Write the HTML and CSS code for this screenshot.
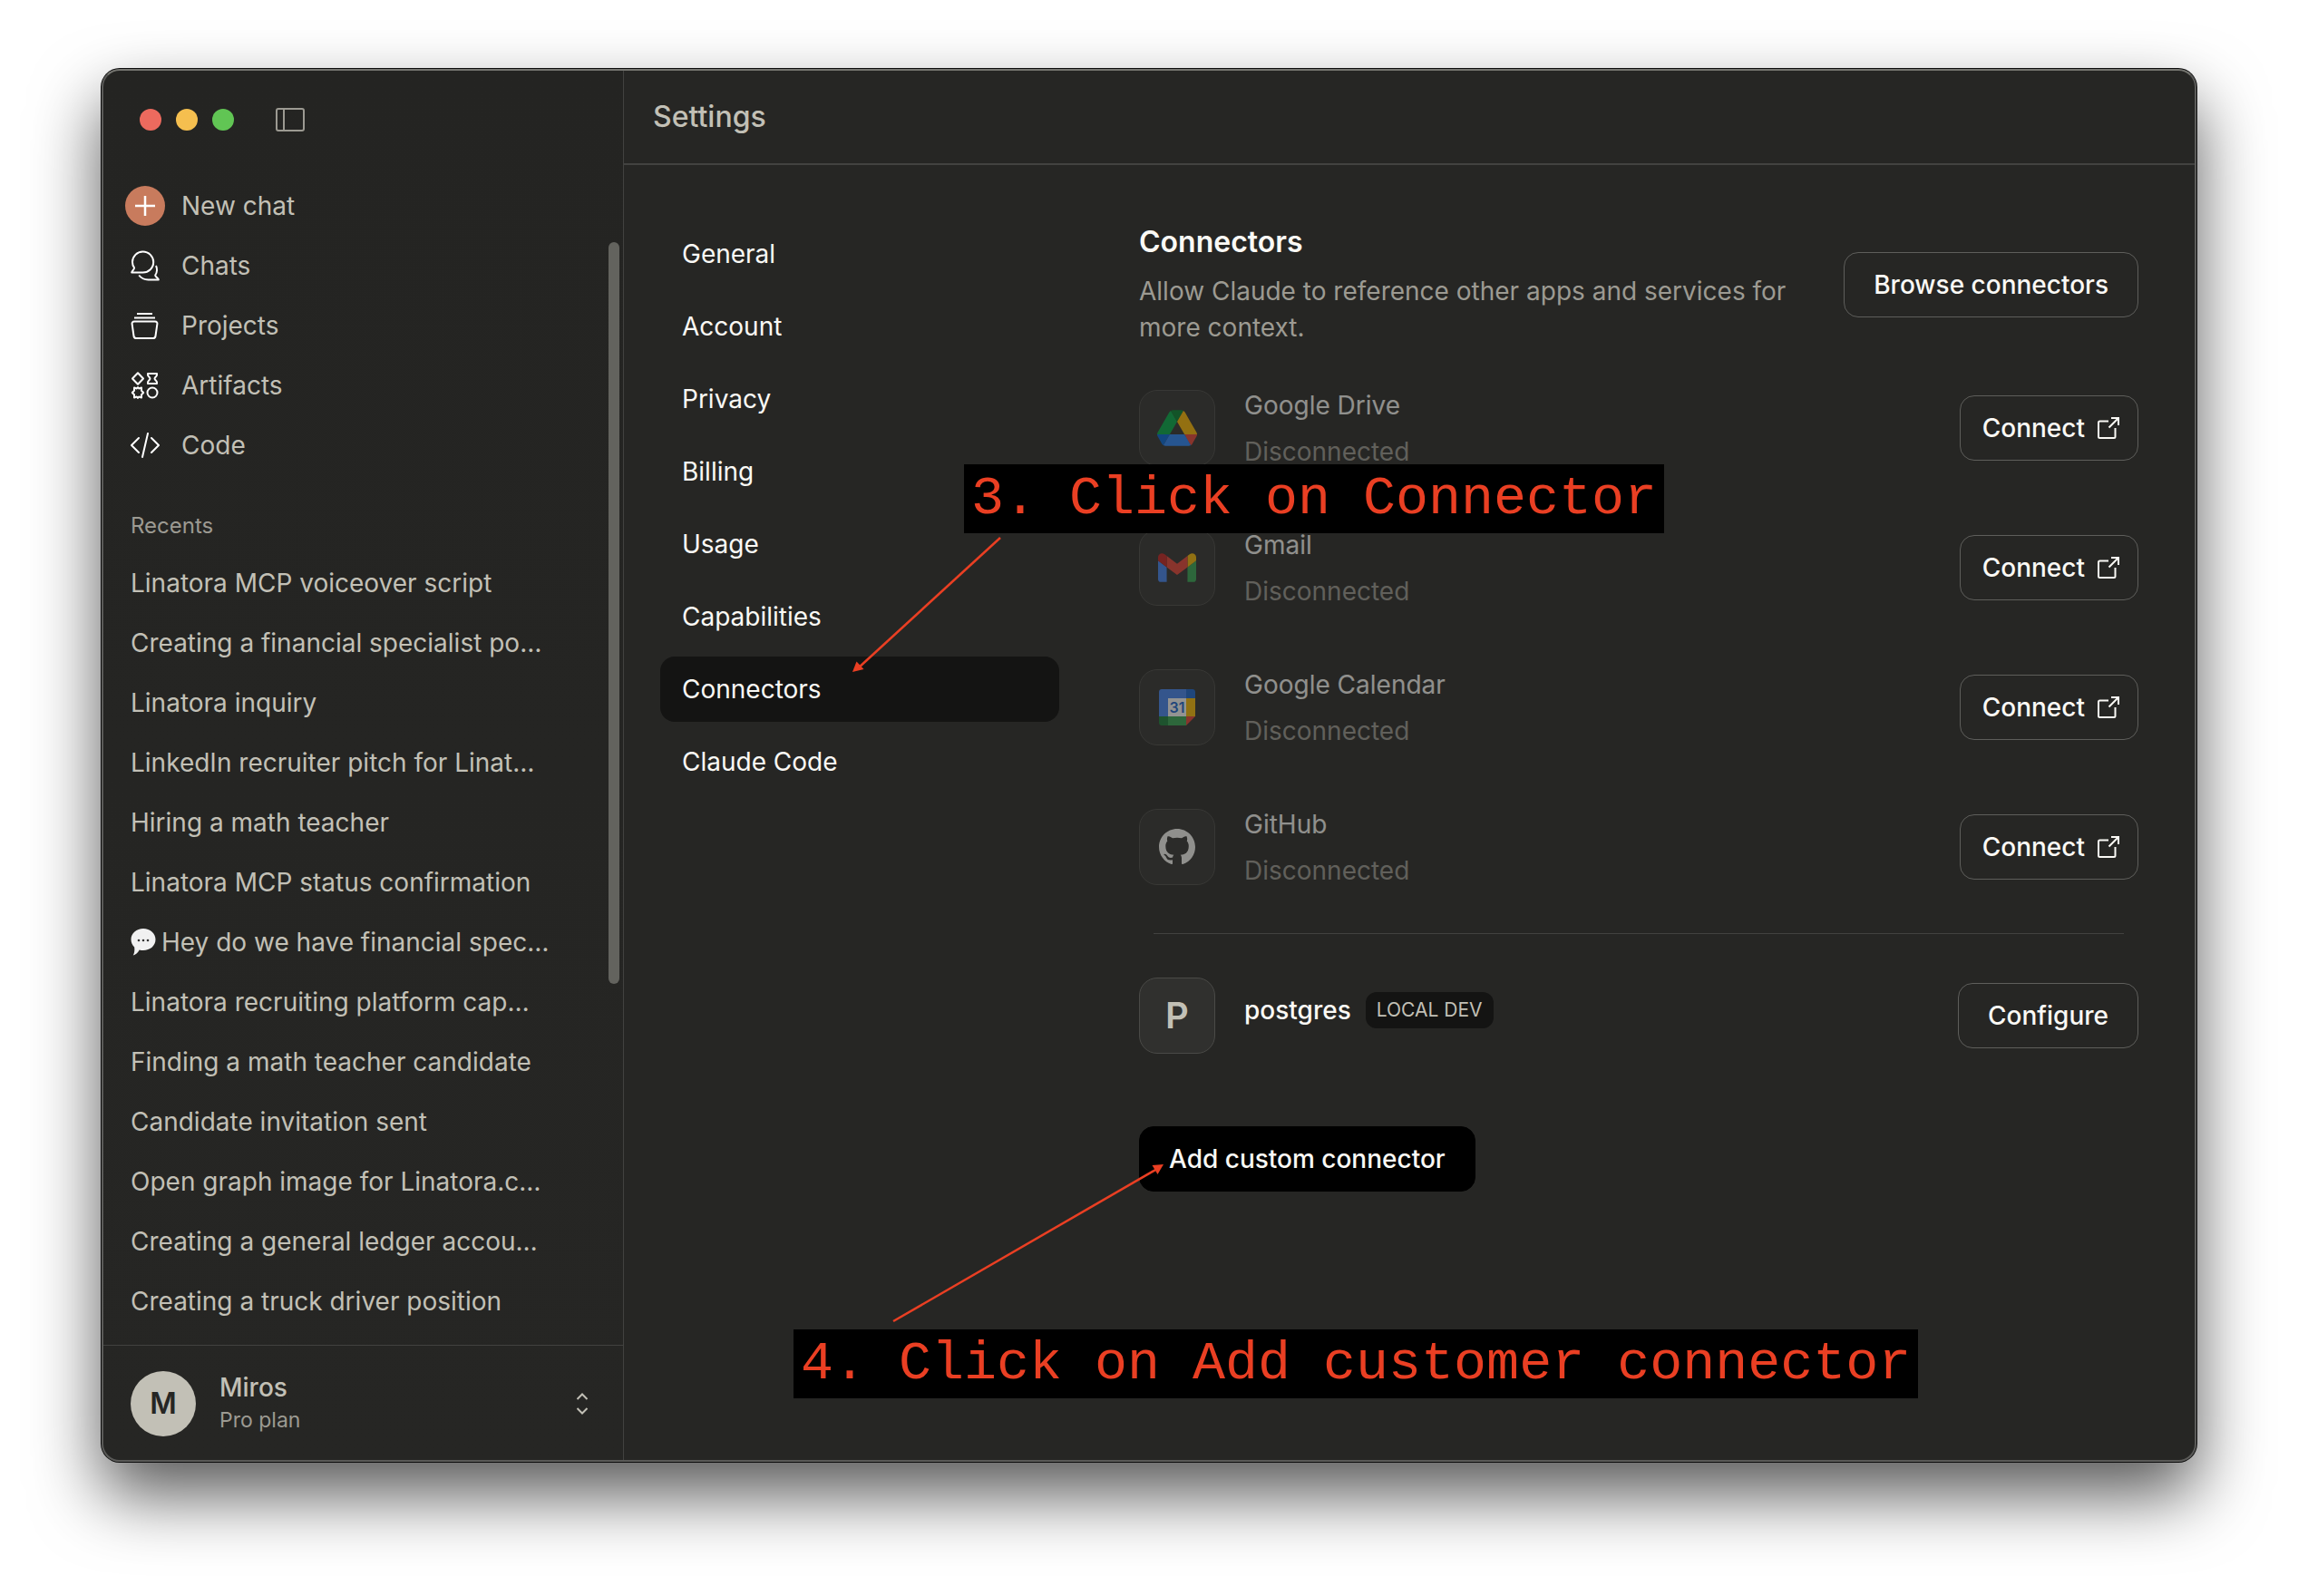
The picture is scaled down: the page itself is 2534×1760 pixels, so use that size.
FILE: index.html
```html
<!DOCTYPE html>
<html lang="en">
<head>
<meta charset="utf-8">
<meta name="viewport" content="width=device-width, initial-scale=1">
<title>Settings – Connectors</title>
<link rel="stylesheet" href="styles.css">
</head>
<body>
<svg class="defs" aria-hidden="true">
  <symbol id="external" viewBox="0 0 24 24">
    <path d="M12 4.500H2.500C1.700 4.500 1 5.200 1 6V21.500C1 22.300 1.700 23 2.500 23H18C18.800 23 19.500 22.300 19.500 21.500V12M15 1H23V9M23 1L12.500 11.500" fill="none" stroke="currentColor" stroke-width="2"/>
  </symbol>
</svg>

<div class="window">
  <aside class="sidebar">
    <div class="titlebar">
      <span class="light light-close"></span>
      <span class="light light-minimize"></span>
      <span class="light light-zoom"></span>
      <button class="icon-button" type="button" aria-label="Toggle sidebar">
        <svg width="32" height="26" viewBox="0 0 32 26"><path d="M3 1H29C30.100 1 31 1.900 31 3V23C31 24.100 30.100 25 29 25H3C1.900 25 1 24.100 1 23V3C1 1.900 1.900 1 3 1ZM9 1V25" fill="none" stroke="currentColor" stroke-width="2"/></svg>
      </button>
    </div>

    <nav class="menu" aria-label="Main">
      <a class="menu-item" href="#new">
        <span class="menu-icon new-chat"><svg width="22" height="22" viewBox="0 0 22 22"><path d="M11 0V22M0 11H22" stroke="#fff" stroke-width="2.500"/></svg></span>
        New chat
      </a>
      <a class="menu-item" href="#chats">
        <span class="menu-icon"><svg width="32" height="34" viewBox="0 0 32 34"><path d="M13.500 1.500C20 1.500 25.200 6.700 25.200 13C25.200 19.500 20 24.500 13.500 24.500H1.200C1.200 23.200 4.500 21 4 19.200C2.700 17.500 2 15.300 2 13C2 6.700 7.200 1.500 13.500 1.500ZM28 17C29.600 20.500 29.200 24.500 27.200 27.500C27.200 29.500 30.800 31 30.800 32.500H19.500C15 32.500 11.500 30.500 9.200 27.500" fill="none" stroke="currentColor" stroke-width="2" stroke-linejoin="round"/></svg></span>
        Chats
      </a>
      <a class="menu-item" href="#projects">
        <span class="menu-icon"><svg width="32" height="32" viewBox="0 0 32 32"><path d="M7 3H24M4 7.500H27M4 11.500H27C28.700 11.500 29.700 12.700 29.400 14.200L27.500 27.500C27.300 29 26.300 30 24.800 30H6.200C4.700 30 3.700 29 3.500 27.500L1.600 14.200C1.300 12.700 2.300 11.500 4 11.500Z" fill="none" stroke="currentColor" stroke-width="2"/></svg></span>
        Projects
      </a>
      <a class="menu-item" href="#artifacts">
        <span class="menu-icon"><svg width="32" height="32" viewBox="0 0 32 32"><path d="M8 2.200L14 8.500L8 14.800L2 8.500ZM19 3H29V4.500C29 6 26.500 7 26.500 8.500S29 11 29 12.500V14H19V12.500C19 11 21.500 10 21.500 8.500S19 6 19 4.500ZM4 18.500L6.800 19.500L8 18L9.200 19.500L12 18.500V21.800L14.200 24L12 26.200V29.500L9.200 28.500L8 30L6.800 28.500L4 29.500V26.200L1.800 24L4 21.800Z" fill="none" stroke="currentColor" stroke-width="2" stroke-linejoin="round"/><circle cx="24" cy="24" r="5.500" fill="none" stroke="currentColor" stroke-width="2"/></svg></span>
        Artifacts
      </a>
      <a class="menu-item" href="#code">
        <span class="menu-icon"><svg width="32" height="28" viewBox="0 0 32 28"><path d="M9 6L1 14L9 22M23 6L31 14L23 22M19 1L13 27" fill="none" stroke="currentColor" stroke-width="2" stroke-linecap="round" stroke-linejoin="round"/></svg></span>
        Code
      </a>
    </nav>

    <h2 class="recents-title">Recents</h2>
    <nav class="recents" aria-label="Recents">
      <a href="#r1">Linatora MCP voiceover script</a>
      <a href="#r2">Creating a financial specialist po…</a>
      <a href="#r3">Linatora inquiry</a>
      <a href="#r4">LinkedIn recruiter pitch for Linat…</a>
      <a href="#r5">Hiring a math teacher</a>
      <a href="#r6">Linatora MCP status confirmation</a>
      <a href="#r7"><svg class="bubble" width="28" height="32" viewBox="0 0 28 32"><path d="M14 1C21.500 1 27.500 6 27.500 13S21.500 25 14 25C12.500 25 11 24.800 9.700 24.400C8 27.500 5.500 29.800 2.800 30.500C4 28.500 4.700 25.500 4.200 21.600C2 19.500 .5 16.500 .5 13C.5 6 6.500 1 14 1Z" fill="#f1f1f1"/><g fill="#333"><circle cx="9" cy="14" r="1.300"/><circle cx="14" cy="14" r="1.300"/><circle cx="19" cy="14" r="1.300"/></g></svg>Hey do we have financial spec…</a>
      <a href="#r8">Linatora recruiting platform cap…</a>
      <a href="#r9">Finding a math teacher candidate</a>
      <a href="#r10">Candidate invitation sent</a>
      <a href="#r11">Open graph image for Linatora.c…</a>
      <a href="#r12">Creating a general ledger accou…</a>
      <a href="#r13">Creating a truck driver position</a>
    </nav>

    <button class="account" type="button">
      <span class="avatar">M</span>
      <span class="account-text">
        <span class="account-name">Miros</span>
        <span class="account-plan">Pro plan</span>
      </span>
      <svg width="14" height="24" viewBox="0 0 14 24"><path d="M1.500 7L7 1.500L12.500 7M1.500 17L7 22.500L12.500 17" fill="none" stroke="currentColor" stroke-width="2"/></svg>
    </button>
    <span class="scrollbar"></span>
  </aside>

  <main class="main">
    <header class="header"><h1>Settings</h1></header>
    <div class="settings">
      <nav class="tabs" aria-label="Settings">
        <a href="#general">General</a>
        <a href="#account">Account</a>
        <a href="#privacy">Privacy</a>
        <a href="#billing">Billing</a>
        <a href="#usage">Usage</a>
        <a href="#capabilities">Capabilities</a>
        <a href="#connectors" aria-current="page">Connectors</a>
        <a href="#claude-code">Claude Code</a>
      </nav>

      <section class="content">
        <div class="intro">
          <div class="intro-text">
            <h2>Connectors</h2>
            <p>Allow Claude to reference other apps and services for more context.</p>
          </div>
          <button class="button" type="button">Browse connectors</button>
        </div>

        <ul class="connectors">
          <li class="connector is-off">
            <span class="tile"><svg width="44" height="40" viewBox="0 0 87.300 78"><path d="m6.600 66.850 3.850 6.650c.8 1.400 1.950 2.500 3.300 3.300l13.750-23.800h-27.500c0 1.550.4 3.100 1.200 4.500z" fill="#0066da"/><path d="m43.650 25-13.750-23.800c-1.350.8-2.500 1.900-3.300 3.300l-25.400 44a9.060 9.060 0 0 0 -1.200 4.500h27.500z" fill="#00ac47"/><path d="m73.550 76.800c1.350-.8 2.500-1.900 3.300-3.300l1.600-2.750 7.650-13.250c.8-1.400 1.200-2.950 1.200-4.500h-27.502l5.852 11.500z" fill="#ea4335"/><path d="m43.650 25 13.750-23.800c-1.350-.8-2.900-1.200-4.500-1.200h-18.500c-1.600 0-3.150.45-4.500 1.200z" fill="#00832d"/><path d="m59.800 53h-32.300l-13.750 23.800c1.350.8 2.900 1.200 4.500 1.200h50.800c1.600 0 3.150-.45 4.500-1.200z" fill="#2684fc"/><path d="m73.400 26.500-12.700-22c-.8-1.400-1.950-2.500-3.300-3.300l-13.750 23.800 16.150 28h27.450c0-1.550-.4-3.100-1.200-4.500z" fill="#ffba00"/></svg></span>
            <span class="connector-text"><span class="name">Google Drive</span><span class="status">Disconnected</span></span>
            <button class="button with-icon" type="button">Connect <svg width="24" height="24"><use href="#external"/></svg></button>
          </li>
          <li class="connector is-off">
            <span class="tile"><svg width="42" height="32" viewBox="52 42 88 66"><path fill="#4285f4" d="M58 108h14V74L52 59v43c0 3.320 2.690 6 6 6"/><path fill="#34a853" d="M120 108h14c3.320 0 6-2.690 6-6V59l-20 15"/><path fill="#fbbc04" d="M120 48v26l20-15v-8c0-7.420-8.470-11.650-14.400-7.200"/><path fill="#ea4335" d="M72 74V48l24 18 24-18v26L96 92"/><path fill="#c5221f" d="M52 51v8l20 15V48l-5.600-4.200c-5.940-4.450-14.400-.22-14.400 7.200"/></svg></span>
            <span class="connector-text"><span class="name">Gmail</span><span class="status">Disconnected</span></span>
            <button class="button with-icon" type="button">Connect <svg width="24" height="24"><use href="#external"/></svg></button>
          </li>
          <li class="connector is-off">
            <span class="tile"><svg width="40" height="40" viewBox="0 0 40 40"><path fill="#4285f4" d="M3 0H31V10H10V30H0V3C0 1.300 1.300 0 3 0Z"/><path fill="#1967d2" d="M30 0H37C38.700 0 40 1.300 40 3V10H30Z"/><path fill="#fbbc04" d="M30 10H40V30H30Z"/><path fill="#34a853" d="M10 30H30V40H10Z"/><path fill="#188038" d="M0 30H10V40H3C1.300 40 0 38.700 0 37Z"/><path fill="#ea4335" d="M30 30H40L30 40Z"/><path fill="#fff" d="M10 10H30V30H10Z"/><text x="20" y="26" text-anchor="middle" class="day">31</text></svg></span>
            <span class="connector-text"><span class="name">Google Calendar</span><span class="status">Disconnected</span></span>
            <button class="button with-icon" type="button">Connect <svg width="24" height="24"><use href="#external"/></svg></button>
          </li>
          <li class="connector is-off">
            <span class="tile"><svg width="40" height="40" viewBox="0 0 16 16"><path fill="#faf9f5" d="M8 0C3.580 0 0 3.580 0 8c0 3.540 2.290 6.530 5.470 7.590.4.070.55-.17.55-.38 0-.19-.01-.82-.01-1.490-2.010.37-2.530-.49-2.690-.94-.09-.23-.48-.94-.82-1.130-.28-.15-.68-.52-.01-.53.63-.01 1.080.58 1.230.82.72 1.210 1.870.87 2.330.66.070-.52.28-.87.51-1.070-1.780-.2-3.640-.89-3.640-3.950 0-.87.31-1.590.82-2.150-.08-.2-.36-1.020.08-2.120 0 0 .67-.21 2.200.82.64-.18 1.320-.27 2-.27s1.360.09 2 .27c1.530-1.040 2.200-.82 2.200-.82.44 1.100.16 1.920.08 2.120.51.56.82 1.270.82 2.150 0 3.070-1.870 3.750-3.650 3.950.29.25.54.73.54 1.480 0 1.070-.01 1.930-.01 2.200 0 .21.15.46.55.38A8.010 8.010 0 0 0 16 8c0-4.420-3.580-8-8-8z"/></svg></span>
            <span class="connector-text"><span class="name">GitHub</span><span class="status">Disconnected</span></span>
            <button class="button with-icon" type="button">Connect <svg width="24" height="24"><use href="#external"/></svg></button>
          </li>
        </ul>

        <hr class="divider">

        <div class="connector local">
          <span class="tile letter">P</span>
          <span class="local-name"><span class="name">postgres</span><span class="badge">LOCAL DEV</span></span>
          <button class="button" type="button">Configure</button>
        </div>

        <button class="button primary" type="button">Add custom connector</button>
      </section>
    </div>
  </main>

  <div class="note note-connector">3. Click on Connector</div>
  <svg class="arrow arrow-connector" width="166" height="152" viewBox="0 0 166 152"><path d="M163 1L6 145" stroke="#ea3f23" stroke-width="2.500"/><path d="M0 149L4.500 137.500L12.500 146Z" fill="#ea3f23"/></svg>
  <div class="note note-add">4. Click on Add customer connector</div>
  <svg class="arrow arrow-add" width="302" height="178" viewBox="0 0 302 178"><path d="M1 176L292 8" stroke="#ea3f23" stroke-width="2.500"/><path d="M299 3L286.500 4L292.500 14Z" fill="#ea3f23"/></svg>
</div>
</body>
</html>
```

FILE: styles.css
```css
:root {
  --bg: #262624;
  --text: #faf9f5;
  --soft: #c2c0b6;
  --muted: #9c9a92;
  --line: #424240;
  --line-strong: #5e5e5b;
  --note: #ea3f23;
}

* { box-sizing: border-box; }

body {
  display: flex;
  min-height: 100vh;
  margin: 0;
  padding: 76px 112px 148px;
  background: #fff;
  color: var(--text);
  font: 400 28px/40px Inter, sans-serif;
}

h1, h2, p, ul { margin: 0; padding: 0; }
ul { list-style: none; }
a { color: inherit; text-decoration: none; }
button { font: inherit; color: inherit; background: none; border: 0; padding: 0; }
svg { display: block; flex: none; }
.defs { position: absolute; width: 0; height: 0; }

.window {
  position: relative;
  display: flex;
  flex: 1;
  min-width: 0;
  border-radius: 20px;
  background: var(--bg);
  box-shadow: 0 0 0 1px #0c0c0c, 0 36px 76px rgba(0, 0, 0, .66);
}

/* Light rim over the window's own edge */
.window::after {
  content: "";
  position: absolute;
  inset: 0;
  border: 2px solid #5a5a58;
  border-top-color: #74746f;
  border-radius: 20px;
  pointer-events: none;
}

/* Sidebar */
.sidebar {
  position: relative;
  display: flex;
  flex-direction: column;
  flex: none;
  width: 576px;
  border-right: 1px solid var(--line);
  border-radius: 20px 0 0 20px;
  background: linear-gradient(#242422, #262624);
  color: var(--soft);
}

.titlebar {
  display: flex;
  align-items: center;
  gap: 16px;
  height: 112px;
  padding-left: 42px;
}
.light { width: 24px; height: 24px; border-radius: 50%; }
.light-close { background: #ed6a5e; }
.light-minimize { background: #f5bf4f; }
.light-zoom { background: #61c554; }
.icon-button { margin-left: 30px; color: var(--muted); }

.menu { padding: 6px 16px 0 24px; }
.menu-item {
  display: flex;
  align-items: center;
  gap: 16px;
  height: 66px;
}
.menu-icon {
  display: grid;
  place-items: center;
  width: 48px;
  height: 44px;
  color: #fff;
}
.new-chat { width: 44px; margin: 0 2px; border-radius: 50%; background: #c87b5d; }

.recents-title {
  padding: 36px 32px 0;
  color: var(--muted);
  font-size: 24px;
  font-weight: 400;
}
.recents { padding: 10px 32px 15px; }
.recents a {
  display: flex;
  align-items: center;
  gap: 6px;
  height: 66px;
  white-space: nowrap;
}

.account {
  display: flex;
  align-items: center;
  gap: 26px;
  flex: 1;
  min-height: 128px;
  padding: 0 38px 0 32px;
  border-top: 1px solid var(--line);
  text-align: left;
}
.avatar {
  display: grid;
  place-items: center;
  width: 72px;
  height: 72px;
  border-radius: 50%;
  background: var(--soft);
  color: var(--bg);
  font-size: 32px;
  font-weight: 600;
}
.account-text { display: flex; flex-direction: column; flex: 1; line-height: 36px; }
.account-name { font-weight: 500; }
.account-plan { color: var(--muted); font-size: 23px; }

.scrollbar {
  position: absolute;
  top: 191px;
  right: 4px;
  width: 12px;
  height: 818px;
  border-radius: 6px;
  background: #63635e;
}

/* Main */
.main { flex: 1; min-width: 0; }
.header {
  display: flex;
  align-items: center;
  height: 106px;
  padding: 2px 32px 0;
  border-bottom: 2px solid var(--line);
}
.header h1 { color: var(--soft); font-size: 32px; font-weight: 500; }

.settings {
  display: flex;
  gap: 88px;
  padding: 62px 64px 64px 40px;
}
.tabs {
  display: flex;
  flex-direction: column;
  gap: 8px;
  flex: none;
  width: 440px;
}
.tabs a { padding: 16px 24px; border-radius: 16px; }
.tabs a[aria-current] { background: #141413; }

.content { flex: 1; min-width: 0; }
.intro {
  display: flex;
  align-items: center;
  justify-content: space-between;
  gap: 56px;
  padding-top: 3px;
}
.intro h2 { margin-bottom: 14px; font-size: 32px; font-weight: 600; }
.intro p { color: var(--muted); }

.button {
  flex: none;
  height: 72px;
  padding: 0 32px;
  border: 1px solid var(--line-strong);
  border-radius: 16px;
  font-weight: 500;
}
.with-icon { display: flex; align-items: center; gap: 14px; padding: 0 20px 0 24px; }
.primary { border-color: #000; background: #000; }

.connectors { display: grid; gap: 70px; padding-top: 49px; }
.connector { display: flex; align-items: center; gap: 32px; height: 84px; }
.connector .button { margin-left: auto; }
.tile {
  display: grid;
  place-items: center;
  width: 84px;
  height: 84px;
  border: 1px solid #4a4a47;
  border-radius: 20px;
  background: #30302e;
}
.letter { color: var(--soft); font-size: 40px; font-weight: 600; }
.connector-text { display: grid; gap: 11px; }
.name { font-weight: 500; }
.is-off .name { font-weight: 400; }
.status { color: var(--muted); }
.is-off .tile, .is-off .name { opacity: .5; }
.is-off .status { opacity: .5; }
.day { fill: #1967d2; font-size: 16px; font-weight: 600; }

.divider {
  height: 1px;
  margin: 53px 16px 48px;
  border: 0;
  background: var(--line);
}
.local-name { display: flex; align-items: center; gap: 16px; padding-bottom: 12px; }
.badge {
  padding: 0 12px;
  border-radius: 12px;
  background: #141413;
  color: var(--soft);
  font-size: 21px;
}
.primary { margin-top: 80px; }

/* Instruction notes laid over the window */
.note {
  position: absolute;
  padding: 0 8px;
  background: #000;
  color: var(--note);
  font: 60px/76px "Courier New", "Liberation Mono", monospace;
  white-space: nowrap;
}
.note-connector { left: 951px; top: 436px; }
.note-add { left: 763px; top: 1390px; }
.arrow { position: absolute; }
.arrow-connector { left: 828px; top: 516px; }
.arrow-add { left: 872px; top: 1205px; }
```
